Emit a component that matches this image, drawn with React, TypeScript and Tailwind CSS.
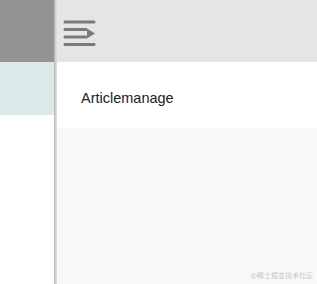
const MenuIcon = () => (
  <svg width="34" height="28" viewBox="0 0 34 28" fill="none">
    <g stroke="#7a7a7a" strokeWidth="3" strokeLinecap="round">
      <line x1="2" y1="2" x2="31" y2="2" />
      <line x1="2" y1="9.5" x2="23" y2="9.5" />
      <line x1="2" y1="17" x2="23" y2="17" />
      <line x1="2" y1="24.5" x2="31" y2="24.5" />
    </g>
    <polygon points="24,8.5 32,13.5 24,18.5" fill="#7a7a7a" />
  </svg>
);

const App = () => {
  return (
    <div className="flex h-[284px] w-[317px] overflow-hidden bg-white font-['Liberation_Sans',Arial,sans-serif]">
      <aside className="flex w-[54px] shrink-0 flex-col bg-white">
        <div className="h-[62px] bg-[#939393]" />
        <div className="h-[53px] bg-[#dce9e9]" />
      </aside>
      <div className="w-[3px] shrink-0 bg-gradient-to-r from-[#b9b9b9] to-[#e2e2e2]" />
      <main className="flex flex-1 flex-col bg-[#f8f9fb]">
        <header className="flex h-[62px] shrink-0 items-center bg-[#e5e5e5] pl-[6px] pt-[6px]">
          <MenuIcon />
        </header>
        <section className="flex h-[66px] items-center bg-white pl-[24px] pt-[8px]">
          <p className="text-[14.5px] text-[#222]">Articlemanage</p>
        </section>
        <div className="flex flex-1 items-end justify-end pb-[4px] pr-[4px]">
          <span className="text-[7px] text-[#c8c8c8] font-['Noto_Sans_CJK_SC',sans-serif]">@稀土掘金技术社区</span>
        </div>
      </main>
    </div>
  );
};

export default App;
